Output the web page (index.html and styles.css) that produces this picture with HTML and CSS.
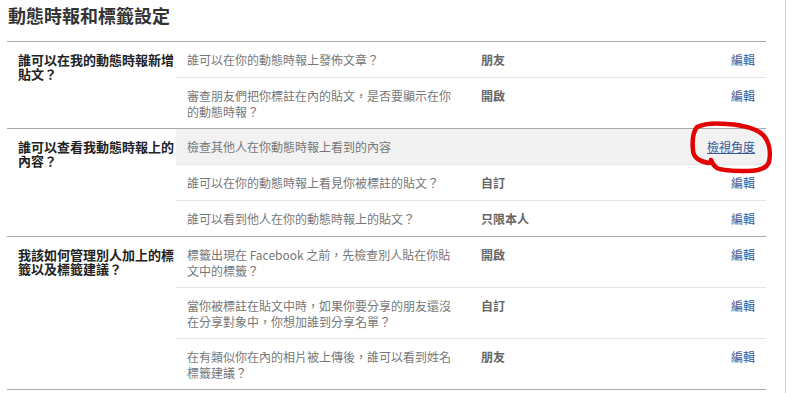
FILE: index.html
```html
<!DOCTYPE html>
<html lang="zh-Hant">
<head>
  <meta charset="UTF-8">
  <title>動態時報和標籤設定</title>
  <link rel="stylesheet" href="styles.css">
</head>
<body>
<div class="page">
  <h2 class="title">動態時報和標籤設定</h2>

  <div class="section">
    <div class="section-label">誰可以在我的動態時報新增貼文？</div>
    <div class="rows">
      <div class="row">
        <div class="question">誰可以在你的動態時報上發佈文章？</div>
        <div class="value">朋友</div>
        <a href="#" class="edit">編輯</a>
      </div>
      <div class="row">
        <div class="question">審查朋友們把你標註在內的貼文，是否要顯示在你的動態時報？</div>
        <div class="value">開啟</div>
        <a href="#" class="edit">編輯</a>
      </div>
    </div>
  </div>

  <div class="section">
    <div class="section-label">誰可以查看我動態時報上的內容？</div>
    <div class="rows">
      <div class="row row-gray">
        <div class="question">檢查其他人在你動態時報上看到的內容</div>
        <div class="value"></div>
        <a href="#" class="edit view-as">檢視角度</a>
      </div>
      <div class="row">
        <div class="question">誰可以在你的動態時報上看見你被標註的貼文？</div>
        <div class="value">自訂</div>
        <a href="#" class="edit">編輯</a>
      </div>
      <div class="row">
        <div class="question">誰可以看到他人在你的動態時報上的貼文？</div>
        <div class="value">只限本人</div>
        <a href="#" class="edit">編輯</a>
      </div>
    </div>
  </div>

  <div class="section">
    <div class="section-label">我該如何管理別人加上的標籤以及標籤建議？</div>
    <div class="rows">
      <div class="row">
        <div class="question">標籤出現在 Facebook 之前，先檢查別人貼在你貼文中的標籤？</div>
        <div class="value">開啟</div>
        <a href="#" class="edit">編輯</a>
      </div>
      <div class="row">
        <div class="question">當你被標註在貼文中時，如果你要分享的朋友還沒在分享對象中，你想加誰到分享名單？</div>
        <div class="value">自訂</div>
        <a href="#" class="edit">編輯</a>
      </div>
      <div class="row">
        <div class="question">在有類似你在內的相片被上傳後，誰可以看到姓名標籤建議？</div>
        <div class="value">朋友</div>
        <a href="#" class="edit">編輯</a>
      </div>
    </div>
  </div>

  <!-- hand-drawn red mark around 檢視角度 -->
  <svg class="scribble" width="90" height="60" viewBox="0 0 90 60">
    <path d="M22 45 C14 44 6 40 6 32 C5 22 6 14 10 9 C18 5 30 5 40 6
             C55 7 70 10 77 18 C82 24 84 34 82 44 C80 50 72 53 60 53
             C48 53 36 53 30 50 C27 48 25 45 24 42"
          fill="none" stroke="#e30000" stroke-width="4.5" stroke-linecap="round" stroke-linejoin="round"/>
  </svg>
</div>
</body>
</html>
```

FILE: styles.css
```css
body {
  margin: 0;
  padding: 0;
  background-color: #fff;
  font-family: "Noto Sans CJK TC", "Liberation Sans", sans-serif;
  font-size: 12px;
  color: #333;
}
.page {
  position: relative;
  width: 786px;
  min-height: 393px;
  border-right: 1px solid #d4d4d4;
  padding: 0 0 0 7px;
  box-sizing: border-box;
}
.title {
  margin: 0;
  padding: 4px 0 0 1px;
  height: 37px;
  font-size: 18px;
  line-height: 22px;
  font-weight: bold;
  color: #333;
}
.section {
  display: flex;
  width: 759px;
  border-top: 1px solid #aaa;
}
.section:last-of-type {
  border-bottom: 1px solid #aaa;
}
.section-label {
  width: 158px;
  flex-shrink: 0;
  padding: 11px 0 0 11px;
  font-size: 13px;
  line-height: 14px;
  font-weight: bold;
  color: #222;
}
.rows {
  flex: 1;
}
.row {
  display: flex;
  align-items: flex-start;
  min-height: 17px;
  padding: 10px 11px 8px 11px;
  line-height: 16px;
  border-top: 1px solid #e6e6e6;
}
.row:first-child {
  border-top: none;
}
.row-gray {
  background-color: #f2f2f2;
}
.question {
  width: 270px;
  flex-shrink: 0;
  margin-right: 24px;
  color: #777;
}
.value {
  flex: 1;
  font-weight: bold;
  color: #666;
}
.edit {
  color: #3b5998;
  text-decoration: none;
}
.view-as {
  text-decoration: underline;
}
.scribble {
  position: absolute;
  left: 687px;
  top: 118px;
}
```
